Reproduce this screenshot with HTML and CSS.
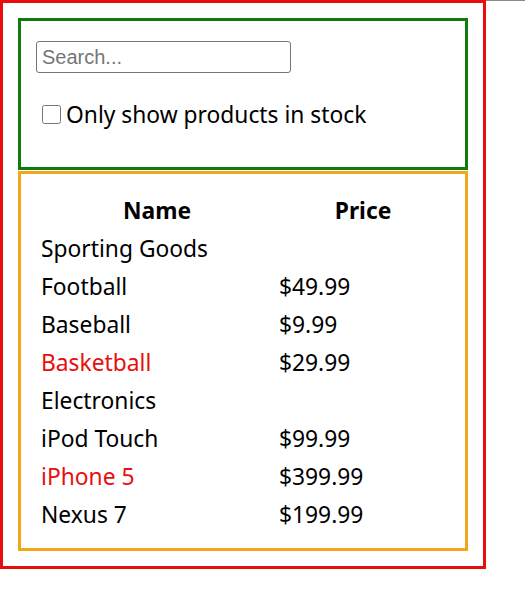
FILE: index.html
```html
<!DOCTYPE html>
<html lang="en">
<head>
<meta charset="utf-8">
<title>Filterable Product Table</title>
<link rel="stylesheet" href="styles.css">
</head>
<body>
<div class="app">
  <form class="search-bar">
    <input class="search-input" type="text" placeholder="Search...">
    <label class="stock-label"><input class="stock-check" type="checkbox"><span>Only show products in stock</span></label>
  </form>
  <div class="product-table-box">
    <table class="product-table">
      <thead>
        <tr><th class="col-name">Name</th><th class="col-price">Price</th></tr>
      </thead>
      <tbody>
        <tr><td colspan="2" class="category">Sporting Goods</td></tr>
        <tr><td>Football</td><td>$49.99</td></tr>
        <tr><td>Baseball</td><td>$9.99</td></tr>
        <tr><td class="out">Basketball</td><td>$29.99</td></tr>
        <tr><td colspan="2" class="category">Electronics</td></tr>
        <tr><td>iPod Touch</td><td>$99.99</td></tr>
        <tr><td class="out">iPhone 5</td><td>$399.99</td></tr>
        <tr><td>Nexus 7</td><td>$199.99</td></tr>
      </tbody>
    </table>
  </div>
</div>
</body>
</html>
```
FILE: styles.css
```css
html, body {
  margin: 0;
  padding: 0;
}
body {
  font-family: "Noto Sans", "Open Sans", sans-serif;
  font-size: 22.8px;
  color: #000;
  background: #fff linear-gradient(#8a8a8a, #8a8a8a) no-repeat top left / 100% 1px;
}
.app {
  width: 450px;
  border: 3px solid #e80e0e;
  padding: 15px;
  background: #fff;
}
.search-bar {
  border: 3px solid #107c10;
  padding: 20px 15px 15px 15px;
  height: 111px;
  margin: 0;
}
.search-input {
  display: block;
  box-sizing: border-box;
  width: 255px;
  height: 32px;
  margin: 0;
  padding: 0 5px;
  border: 1px solid #767676;
  border-radius: 3px;
  font-family: "Liberation Sans", Arial, sans-serif;
  font-size: 20px;
  color: #000;
}
.search-input::placeholder {
  color: #767676;
}
.stock-label {
  display: flex;
  align-items: center;
  margin-top: 25px;
  height: 32px;
  white-space: nowrap;
}
.stock-check {
  width: 19px;
  height: 19px;
  margin: 0 5px 0 6px;
}
.product-table-box {
  border: 3px solid #f0a818;
  margin-top: 1px;
  padding: 15px;
}
.product-table {
  border-spacing: 2px;
  border-collapse: separate;
}
.product-table th,
.product-table td {
  padding: 4px 1px 0 1px;
  height: 32px;
  line-height: 32px;
  text-align: left;
  white-space: nowrap;
}
.product-table th {
  text-align: center;
  font-weight: bold;
}
.product-table td:first-child,
.col-name {
  width: 234px;
  padding-left: 3px;
}
.col-price,
.product-table td + td {
  width: 168px;
}
.out {
  color: #e80e0e;
}
```
